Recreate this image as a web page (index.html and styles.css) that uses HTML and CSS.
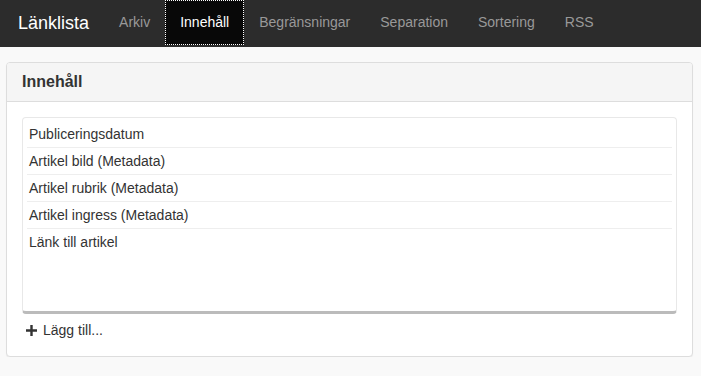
FILE: index.html
```html
<!DOCTYPE html>
<html lang="sv">
<head>
    <meta charset="UTF-8">
    <meta name="viewport" content="width=device-width, initial-scale=1.0">
    <title>Länklista</title>
    <link rel="stylesheet" href="styles.css">
</head>
<body>
    <!-- Top navigation -->
    <nav class="navbar">
        <a class="brand" href="#">Länklista</a>
        <ul class="nav">
            <li><a href="#">Arkiv</a></li>
            <li class="active"><a href="#">Innehåll</a></li>
            <li><a href="#">Begränsningar</a></li>
            <li><a href="#">Separation</a></li>
            <li><a href="#">Sortering</a></li>
            <li><a href="#">RSS</a></li>
        </ul>
    </nav>

    <div class="container">
        <div class="panel">
            <div class="panel-heading">
                <h3>Innehåll</h3>
            </div>
            <div class="panel-body">
                <ul class="field-list">
                    <li>Publiceringsdatum</li>
                    <li>Artikel bild (Metadata)</li>
                    <li>Artikel rubrik (Metadata)</li>
                    <li>Artikel ingress (Metadata)</li>
                    <li>Länk till artikel</li>
                </ul>
                <a class="add-link" href="#">
                    <svg class="icon-plus" width="11" height="11" viewBox="0 0 11 11">
                        <path d="M5.5 0v11M0 5.5h11" stroke="#333" stroke-width="2.4"/>
                    </svg>
                    Lägg till...
                </a>
            </div>
        </div>
    </div>
</body>
</html>
```

FILE: styles.css
```css
body {
    font-family: "Liberation Sans", Arial, sans-serif;
    font-size: 14px;
    background-color: #f9f9f9;
    color: #333;
    margin: 0;
    padding: 0;
}

.navbar {
    display: flex;
    align-items: stretch;
    height: 47px;
    background-color: #2c2c2c;
}

.brand {
    padding: 0 15px 0 18px;
    font-size: 18px;
    line-height: 46px;
    color: #fff;
    text-decoration: none;
}

.nav {
    display: flex;
    margin: 0;
    padding: 0;
    list-style: none;
}

.nav a {
    display: block;
    padding: 0 15px;
    line-height: 45px;
    color: #999;
    text-decoration: none;
}

.nav .active a {
    background-color: #080808;
    color: #fff;
    outline: 1px dotted #fff;
    outline-offset: -1px;
    height: 45px;
}

.container {
    padding: 15px 8px 0 6px;
}

.panel {
    background-color: #fff;
    border: 1px solid #ddd;
    border-radius: 4px;
    box-shadow: 0 1px 1px rgba(0, 0, 0, 0.05);
}

.panel-heading {
    background-color: #f5f5f5;
    border-bottom: 1px solid #ddd;
    border-radius: 3px 3px 0 0;
    padding: 0 15px;
    height: 38px;
}

.panel-heading h3 {
    margin: 0;
    font-size: 16px;
    line-height: 38px;
    font-weight: bold;
    color: #333;
}

.panel-body {
    padding: 15px 15px 16px;
}

.field-list {
    list-style: none;
    margin: 0;
    padding: 3px 4px 0;
    box-sizing: border-box;
    height: 197px;
    border: 1px solid #e8e8e8;
    border-bottom: 3px solid #bbb;
    border-radius: 4px;
}

.field-list li {
    height: 26px;
    line-height: 26px;
    padding: 0 2px;
    border-bottom: 1px solid #eee;
}

.field-list li:last-child {
    border-bottom: none;
}

.add-link {
    display: flex;
    align-items: center;
    gap: 6px;
    margin-top: 6px;
    padding-left: 4px;
    line-height: 20px;
    color: #333;
    text-decoration: none;
}
```
